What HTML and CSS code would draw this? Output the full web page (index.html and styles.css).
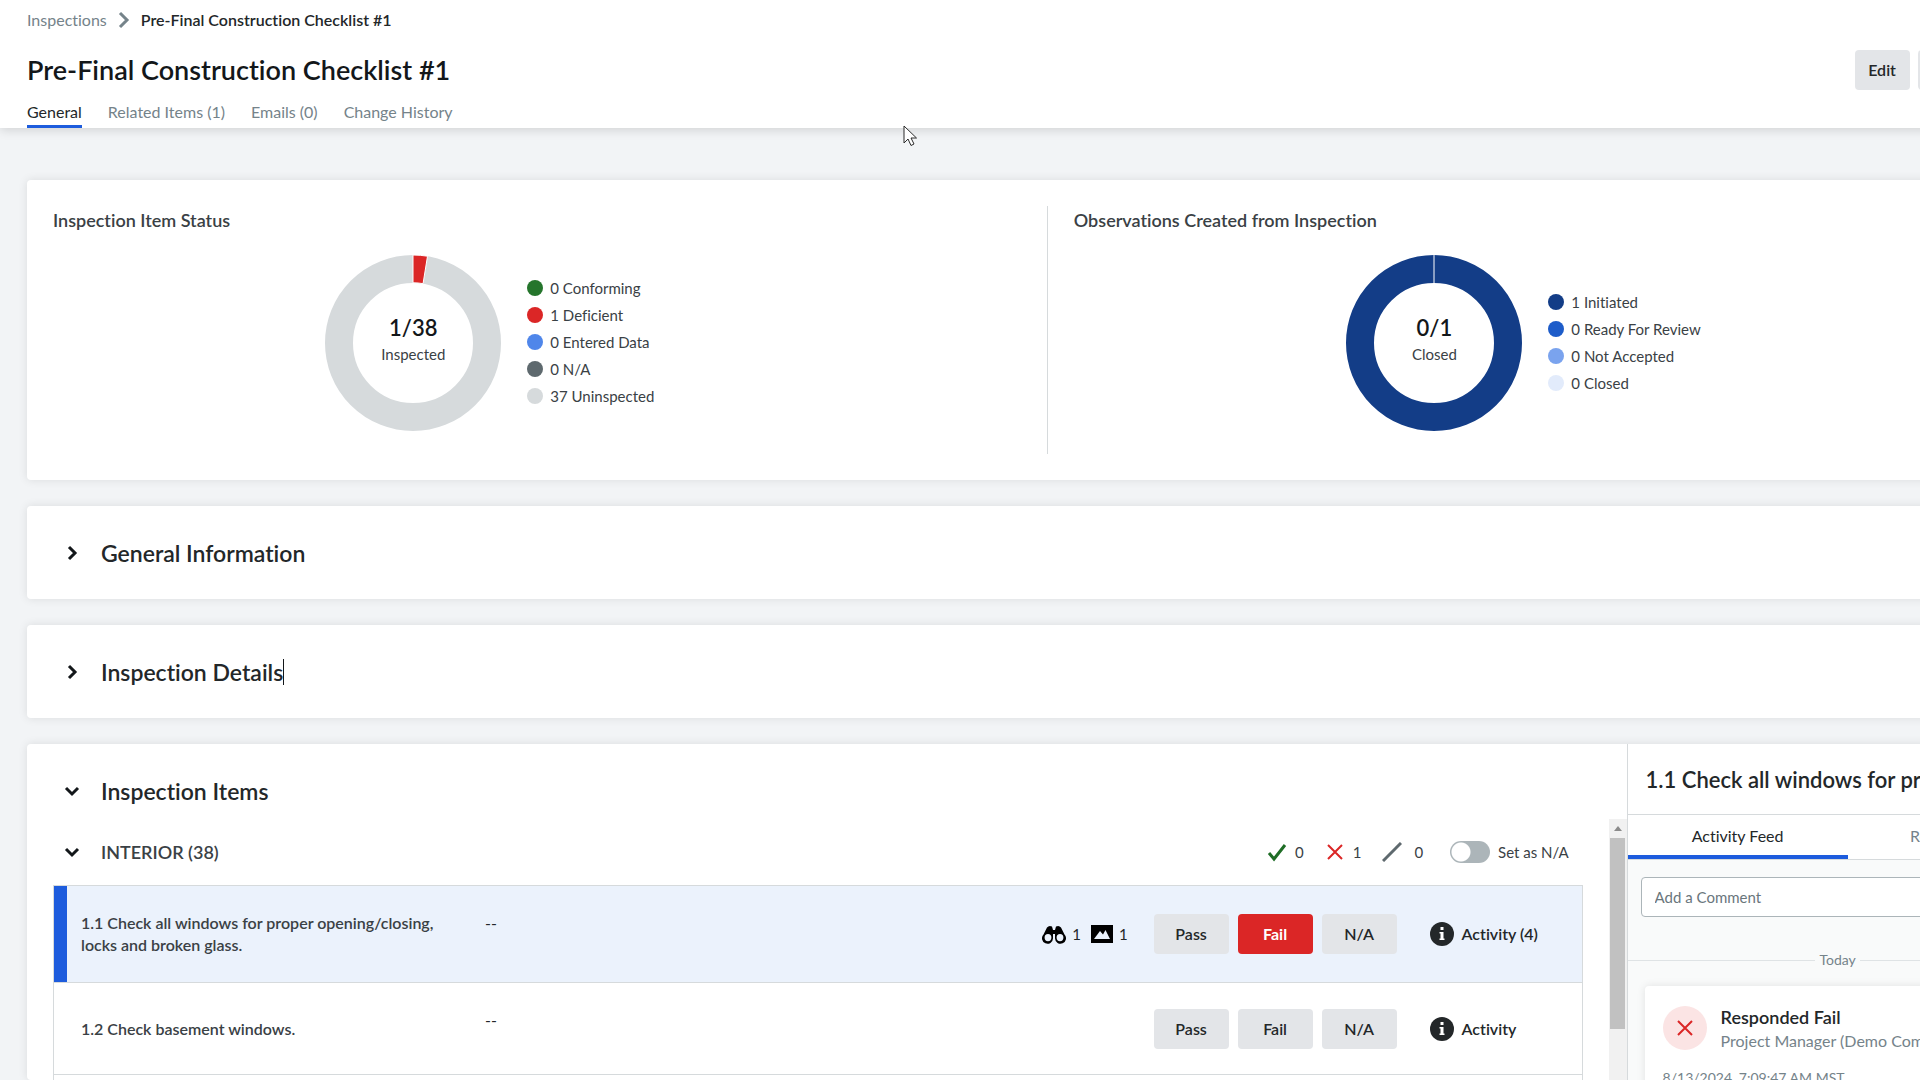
FILE: index.html
```html
<!DOCTYPE html>
<html lang="en">
<head>
  <meta charset="UTF-8">
  <meta name="viewport" content="width=device-width, initial-scale=1">
  <title>Pre-Final Construction Checklist #1</title>
  <link rel="stylesheet" href="styles.css">
</head>
<body>

  <div class="page">
    <header class="header">
      <nav class="breadcrumb" aria-label="Breadcrumb">
        <a href="#">Inspections</a>
        <svg class="crumb-arrow" viewBox="0 0 12 18" aria-hidden="true"><path d="M2 2l7 7-7 7"/></svg>
        <span class="current">Pre-Final Construction Checklist #1</span>
      </nav>
      <div class="title-row">
        <h1>Pre-Final Construction Checklist #1</h1>
        <div class="actions">
          <button type="button" class="btn btn-edit">Edit</button>
          <button type="button" class="btn btn-more" aria-label="More actions"></button>
        </div>
      </div>
      <nav class="tabs" aria-label="Inspection">
        <a href="#" class="active">General</a>
        <a href="#">Related Items (1)</a>
        <a href="#">Emails (0)</a>
        <a href="#">Change History</a>
      </nav>
    </header>

    <main class="content">
      <section class="card summary">
        <div class="chart-panel">
          <h3>Inspection Item Status</h3>
          <div class="chart">
            <div class="donut">
              <svg viewBox="0 0 176 176" aria-hidden="true">
                <circle class="ring ring-gray" cx="88" cy="88" r="74"/>
                <path class="slice-red" d="M88 0A88 88 0 0 1 102.500 1.200L98.060 28.640A60.200 60.200 0 0 0 88 27.800Z"/>
              </svg>
              <div class="donut-label"><strong>1/38</strong><span>Inspected</span></div>
            </div>
            <ul class="legend">
              <li><i class="dot green"></i>0 Conforming</li>
              <li><i class="dot red"></i>1 Deficient</li>
              <li><i class="dot blue"></i>0 Entered Data</li>
              <li><i class="dot slate"></i>0 N/A</li>
              <li><i class="dot gray"></i>37 Uninspected</li>
            </ul>
          </div>
        </div>
        <div class="chart-panel">
          <h3>Observations Created from Inspection</h3>
          <div class="chart">
            <div class="donut">
              <svg viewBox="0 0 176 176" aria-hidden="true">
                <circle class="ring ring-navy" cx="88" cy="88" r="74"/>
                <path class="split" d="M88 0v29"/>
              </svg>
              <div class="donut-label"><strong>0/1</strong><span>Closed</span></div>
            </div>
            <ul class="legend">
              <li><i class="dot navy"></i>1 Initiated</li>
              <li><i class="dot royal"></i>0 Ready For Review</li>
              <li><i class="dot sky"></i>0 Not Accepted</li>
              <li><i class="dot pale"></i>0 Closed</li>
            </ul>
          </div>
        </div>
      </section>

      <section class="card section">
        <button type="button" class="toggle" aria-label="Expand General Information"><svg viewBox="0 0 18 18"><path d="M6 3l6 6-6 6"/></svg></button>
        <h2>General Information</h2>
      </section>

      <section class="card section">
        <button type="button" class="toggle" aria-label="Expand Inspection Details"><svg viewBox="0 0 18 18"><path d="M6 3l6 6-6 6"/></svg></button>
        <h2 class="caret">Inspection Details</h2>
      </section>

      <section class="card items">
        <div class="items-main">
          <div class="items-title">
            <button type="button" class="toggle" aria-label="Collapse Inspection Items"><svg viewBox="0 0 18 18"><path d="M3 6l6 6 6-6"/></svg></button>
            <h2>Inspection Items</h2>
          </div>
          <div class="items-body">
            <div class="items-scroll">
              <div class="group-head">
                <button type="button" class="toggle" aria-label="Collapse Interior"><svg viewBox="0 0 18 18"><path d="M3 6l6 6 6-6"/></svg></button>
                <h3>INTERIOR (38)</h3>
                <div class="counts">
                  <span><svg viewBox="0 0 20 20"><path class="pass" d="M2 11l5 6L18 3"/></svg>0</span>
                  <span><svg viewBox="0 0 20 20"><path class="fail" d="M3 3l14 14M17 3L3 17"/></svg>1</span>
                  <span class="count-na"><svg viewBox="0 0 20 20"><path class="na" d="M1 19L19 1"/></svg>0</span>
                  <label class="switch"><input type="checkbox">Set as N/A</label>
                </div>
              </div>
              <div class="table-wrap">
                <table class="item-table">
                  <tbody>
                    <tr class="selected">
                      <th scope="row">1.1 Check all windows for proper opening/closing, locks and broken glass.</th>
                      <td class="response">--</td>
                      <td class="links">
                        <div>
                          <svg class="binoculars" viewBox="0 0 24 20"><path fill-rule="evenodd" d="M5 3.500Q7 1 10 2.500L11 6h2l1-3.500Q17 1 19 3.500l3.500 7A5.500 5.500 0 1 1 13 14.500V10h-2v4.500A5.500 5.500 0 1 1 1.500 10.500ZM6 10a3.400 3.600 0 1 0 0 7.200A3.400 3.600 0 1 0 6 10ZM18 10a3.400 3.600 0 1 0 0 7.200A3.400 3.600 0 1 0 18 10Z"/></svg><span>1</span>
                          <svg class="photo" viewBox="0 0 22 18"><path fill-rule="evenodd" d="M0 0h22v18H0ZM3 14h16L14.500 5 12 9.500 9 6Z"/></svg><span>1</span>
                        </div>
                      </td>
                      <td class="answers">
                        <div>
                          <button type="button" class="btn">Pass</button>
                          <button type="button" class="btn failed">Fail</button>
                          <button type="button" class="btn">N/A</button>
                        </div>
                      </td>
                      <td class="activity">
                        <a href="#"><svg viewBox="0 0 24 24"><circle cx="12" cy="12" r="12"/><path d="M10.500 5h3v3h-3zM9.500 10h4v6.500h1V18h-5v-1.500h1v-5h-1z"/></svg>Activity (4)</a>
                      </td>
                    </tr>
                    <tr>
                      <th scope="row">1.2 Check basement windows.</th>
                      <td class="response">--</td>
                      <td class="links"></td>
                      <td class="answers">
                        <div>
                          <button type="button" class="btn">Pass</button>
                          <button type="button" class="btn">Fail</button>
                          <button type="button" class="btn">N/A</button>
                        </div>
                      </td>
                      <td class="activity">
                        <a href="#"><svg viewBox="0 0 24 24"><circle cx="12" cy="12" r="12"/><path d="M10.500 5h3v3h-3zM9.500 10h4v6.500h1V18h-5v-1.500h1v-5h-1z"/></svg>Activity</a>
                      </td>
                    </tr>
                  </tbody>
                </table>
              </div>
            </div>
            <div class="scrollbar" aria-hidden="true">
              <div class="scroll-up"></div>
              <div class="scroll-thumb"></div>
            </div>
          </div>
        </div>

        <aside class="side">
          <h2>1.1 Check all windows for proper opening/closing</h2>
          <nav class="side-tabs" aria-label="Item">
            <a href="#" class="active">Activity Feed</a>
            <a href="#">Related Items</a>
          </nav>
          <div class="feed">
            <input type="text" class="comment" placeholder="Add a Comment" aria-label="Add a Comment">
            <div class="day"><span>Today</span></div>
            <article class="entry">
              <div class="entry-head">
                <div class="badge"><svg viewBox="0 0 20 20"><path class="fail" d="M3 3l14 14M17 3L3 17"/></svg></div>
                <div>
                  <h4>Responded Fail</h4>
                  <p>Project Manager (Demo Company)</p>
                </div>
              </div>
              <time datetime="2024-08-13T07:09:47-07:00">8/13/2024, 7:09:47 AM MST</time>
            </article>
          </div>
        </aside>
      </section>
    </main>
  </div>

  <svg class="pointer" viewBox="0 0 14 22" aria-hidden="true"><path d="M1 1v17l4-4 3 6.500 3-1.500-3-6h5.500z"/></svg>

</body>
</html>
```

FILE: styles.css
```css
* {
  margin: 0;
  padding: 0;
  box-sizing: border-box;
}

body {
  height: 100vh;
  overflow: hidden;
  position: relative;
  background: #f2f4f6;
  color: #232729;
  font-family: "Lato", "Liberation Sans", sans-serif;
  font-size: 16px;
  line-height: 22px;
  font-variant-ligatures: none;
}

a {
  color: inherit;
  text-decoration: none;
}

button {
  font: inherit;
  color: inherit;
  border: none;
  background: none;
  cursor: pointer;
}

svg {
  display: block;
  flex: none;
}

/* wider than the window, the right part is scrolled out */
.page {
  width: 110.5%;
  height: 100vh;
  display: flex;
  flex-direction: column;
}

/* Header */
.header {
  background: #fff;
  padding: 0 27px;
  box-shadow: 0 2px 10px rgba(0, 0, 0, 0.14);
}

.breadcrumb {
  display: flex;
  align-items: center;
  height: 40px;
  color: #75838a;
}

.crumb-arrow {
  width: 12px;
  height: 18px;
  margin: 0 11px;
  fill: none;
  stroke: #75838a;
  stroke-width: 3;
}

.breadcrumb .current {
  color: #232729;
  font-weight: 600;
}

.title-row {
  display: flex;
  align-items: center;
  justify-content: space-between;
  height: 60px;
}

h1 {
  font-size: 27px;
  line-height: 32px;
  font-weight: 600;
  color: #13171a;
}

.actions {
  display: flex;
  gap: 8px;
}

.btn {
  height: 40px;
  width: 75px;
  border-radius: 4px;
  background: #e3e5e8;
  font-weight: 600;
}

.btn-edit {
  width: 55px;
}

.btn-more {
  width: 177px;
}

.tabs {
  display: flex;
  gap: 26px;
  color: #75838a;
}

.tabs a {
  height: 28px;
  padding-top: 1px;
  border-bottom: 3px solid transparent;
}

.tabs .active {
  color: #232729;
  border-color: #1d5cdd;
}

/* Cards */
.content {
  flex: 1;
  min-height: 0;
  display: flex;
  flex-direction: column;
  gap: 26px;
  padding: 52px 27px 0;
}

.card {
  flex: none;
  background: #fff;
  border-radius: 4px;
  box-shadow: 0 0 10px rgba(0, 0, 0, 0.1);
}

h2 {
  font-size: 23px;
  line-height: 30px;
  font-weight: 600;
}

h3 {
  font-size: 18px;
  line-height: 22px;
  font-weight: 600;
  color: #3a4145;
}

.summary {
  display: grid;
  grid-template-columns: 1fr 1fr;
  padding: 26px 0 26px 26px;
}

.chart-panel {
  height: 248px;
  margin-right: 26px;
  padding-top: 3px;
}

.chart-panel:first-child {
  border-right: 1px solid #d6dadc;
}

.chart {
  display: flex;
  align-items: center;
  gap: 26px;
  padding: 24px 0 0 27.4%;
}

.donut {
  position: relative;
  width: 176px;
  height: 176px;
}

.ring {
  fill: none;
  stroke-width: 28;
}

.ring-gray {
  stroke: #d6dadc;
}

.ring-navy {
  stroke: #133d87;
}

.slice-red {
  fill: #db2626;
  stroke: #fff;
  stroke-width: 1;
}

.split {
  stroke: #fff;
  stroke-width: 1;
}

.donut-label {
  position: absolute;
  inset: 0;
  display: flex;
  flex-direction: column;
  align-items: center;
  justify-content: center;
  padding-bottom: 9px;
  font-size: 15px;
  color: #3a4145;
}

.donut-label strong {
  font-size: 22px;
  line-height: 30px;
  font-weight: 600;
  color: #13171a;
}

.legend {
  list-style: none;
  padding-bottom: 2px;
  font-size: 15px;
  color: #3a4145;
}

.legend li {
  display: flex;
  align-items: center;
  gap: 7px;
  height: 27px;
}

.dot {
  width: 16px;
  height: 16px;
  border-radius: 50%;
}

.green { background: #25752c; }
.red { background: #db2626; }
.blue { background: #4f86ea; }
.slate { background: #5e696e; }
.gray { background: #d6dadc; }
.navy { background: #133d87; }
.royal { background: #1d5cc9; }
.sky { background: #7aa3ee; }
.pale { background: #e2ebfb; }

.section {
  display: flex;
  align-items: center;
  height: 93px;
  padding-left: 36px;
}

.toggle {
  width: 18px;
  height: 18px;
  margin-right: 20px;
}

.toggle svg {
  width: 18px;
  height: 18px;
  fill: none;
  stroke: #13171a;
  stroke-width: 3;
}

.caret {
  border-right: 1px solid #13171a;
  line-height: 26px;
}

/* Inspection items */
.items {
  flex: 1;
  min-height: 0;
  display: flex;
  overflow: hidden;
}

.items-main {
  flex: 1;
  display: flex;
  flex-direction: column;
}

.items-title {
  display: flex;
  align-items: center;
  height: 75px;
  padding: 18px 0 0 36px;
}

.items-body {
  flex: 1;
  display: flex;
}

.items-scroll {
  flex: 1;
  display: flex;
  flex-direction: column;
  padding: 0 26px;
}

.group-head {
  display: flex;
  align-items: center;
  height: 66px;
  padding-left: 10px;
}

.counts {
  margin-left: auto;
  padding-right: 14px;
  display: flex;
  align-items: center;
  gap: 21px;
  font-size: 15px;
  color: #3a4145;
}

.counts span {
  display: flex;
  align-items: center;
  gap: 8px;
}

.counts .count-na {
  gap: 12px;
}

.counts svg {
  width: 20px;
  height: 20px;
}

.counts path,
.badge path {
  fill: none;
  stroke-width: 3;
}

.pass { stroke: #1f6d26; }
.fail { stroke: #db2626; }
.na { stroke: #5e696e; }

.counts .fail,
.badge .fail {
  stroke-width: 2;
}

.switch {
  display: flex;
  align-items: center;
  gap: 8px;
  margin-left: 6px;
}

.switch input {
  appearance: none;
  width: 40px;
  height: 22px;
  border-radius: 11px;
  background: radial-gradient(circle at 11px 50%, #fff 9px, #acb5b9 10px);
}

.table-wrap {
  flex: 1;
  border: 1px solid #d6dadc;
  border-bottom: none;
}

.item-table {
  width: 100%;
  border-spacing: 0;
  table-layout: fixed;
}

.item-table th,
.item-table td {
  border-bottom: 1px solid #d6dadc;
  text-align: left;
}

.item-table th {
  width: 431px;
  height: 92px;
  padding: 0 50px 0 27px;
  font-weight: 600;
  color: #3a4145;
}

.selected {
  background: #ebf2fc;
}

.item-table .selected th {
  height: 97px;
  box-shadow: inset 13px 0 #1d5cdd;
}

.item-table .response {
  vertical-align: top;
  padding-top: 26px;
}

.links div {
  display: flex;
  align-items: center;
  justify-content: flex-end;
  gap: 6px;
  padding-right: 26px;
  font-size: 15px;
}

.binoculars {
  width: 24px;
  height: 20px;
}

.photo {
  width: 22px;
  height: 18px;
  margin-left: 4px;
}

.answers {
  width: 276px;
}

.answers div {
  display: flex;
  gap: 9px;
}

.btn.failed {
  background: #db2626;
  color: #fff;
  font-weight: 700;
}

.activity {
  width: 152px;
  font-weight: 600;
}

.activity a {
  display: flex;
  align-items: center;
  gap: 8px;
}

.activity svg {
  width: 24px;
  height: 24px;
  fill: #232729;
}

.activity svg path {
  fill: #fff;
}

.scrollbar {
  width: 18px;
  background: #f1f1f1;
}

.scroll-up {
  width: 8px;
  margin: 7px auto;
  border: 4px solid transparent;
  border-top: none;
  border-bottom: 5px solid #8b8b8b;
}

.scroll-thumb {
  width: 15px;
  height: 191px;
  margin: 0 auto;
  background: #c1c1c1;
}

/* Side panel */
.side {
  width: 468px;
  border-left: 1px solid #d6dadc;
  display: flex;
  flex-direction: column;
}

.side h2 {
  flex: none;
  height: 70px;
  padding: 21px 18px 0;
  font-size: 22px;
  white-space: nowrap;
  overflow: hidden;
  text-overflow: ellipsis;
}

.side-tabs {
  flex: none;
  display: flex;
  border-top: 1px solid #d6dadc;
  border-bottom: 1px solid #d6dadc;
  color: #75838a;
}

.side-tabs a {
  width: 220px;
  height: 44px;
  padding-top: 10px;
  text-align: center;
  border-bottom: 4px solid transparent;
}

.side-tabs .active {
  color: #232729;
  border-color: #1d5cdd;
}

.feed {
  flex: 1;
  background: #f9fafa;
  padding: 17px 40px 0 13px;
}

.comment {
  width: 100%;
  height: 40px;
  padding: 0 13px;
  border: 1px solid #acb5b9;
  border-radius: 4px;
  background: #fff;
  font: inherit;
  font-size: 15px;
}

.comment::placeholder {
  color: #6a767c;
}

.day {
  display: flex;
  align-items: center;
  gap: 4px;
  margin: 32px 7px 15px -13px;
  font-size: 14px;
  color: #75838a;
}

.day::before,
.day::after {
  content: "";
  flex: 1;
  border-top: 1px solid #dfe3e5;
}

.entry {
  margin-left: 4px;
  padding: 18px;
  background: #fff;
  border-radius: 4px;
  box-shadow: 0 0 8px rgba(0, 0, 0, 0.1);
}

.entry-head {
  display: flex;
  align-items: center;
  gap: 14px;
  color: #75838a;
}

.entry h4 {
  font-size: 18px;
  line-height: 26px;
  font-weight: 600;
  color: #232729;
}

.badge {
  width: 44px;
  height: 44px;
  border-radius: 50%;
  background: #fbe4e4;
  display: grid;
  place-items: center;
}

.badge svg {
  width: 20px;
  height: 20px;
}

.entry time {
  display: block;
  margin-top: 15px;
  font-size: 14px;
  color: #75838a;
}

/* mouse pointer over the page */
.pointer {
  position: absolute;
  top: 125px;
  left: 903px;
  width: 14px;
  height: 22px;
  fill: #fff;
  stroke: #2b2b2b;
  stroke-width: 1;
}
```
